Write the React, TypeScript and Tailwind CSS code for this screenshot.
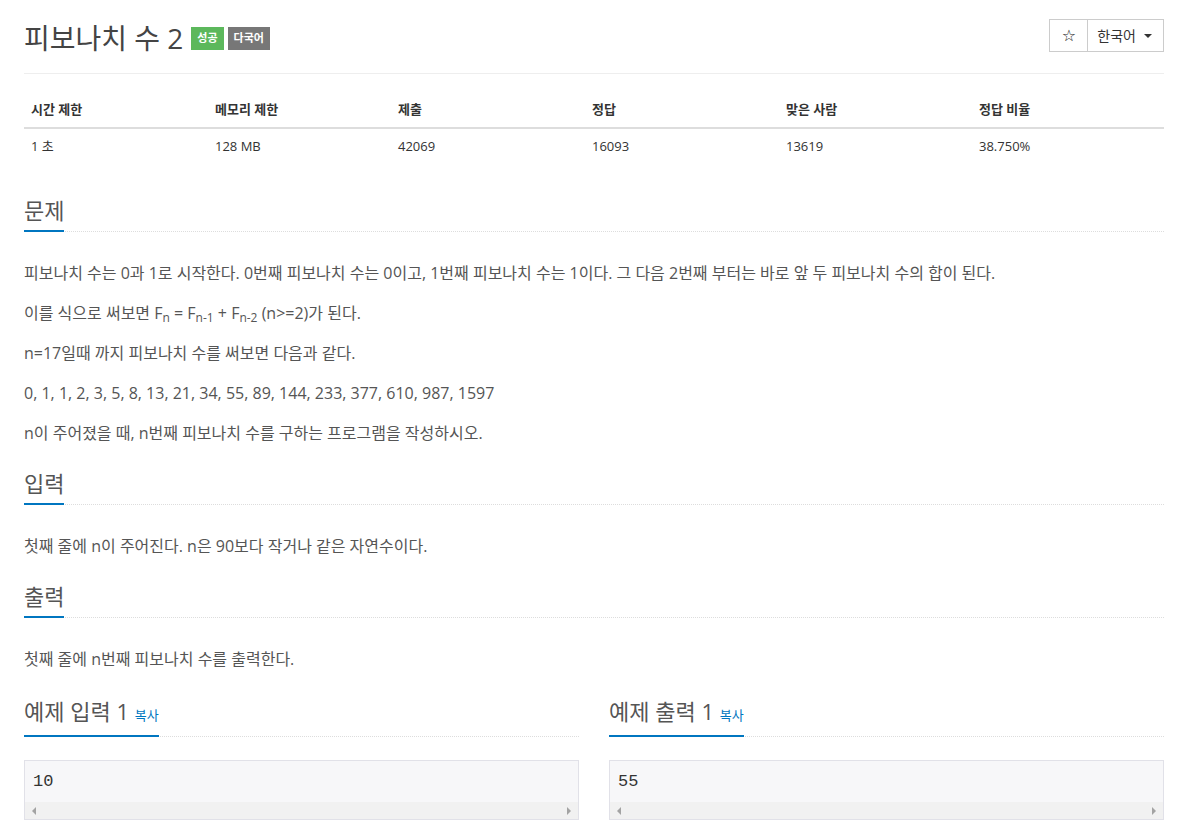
const font = "font-['Open_Sans','Noto_Sans_CJK_KR',sans-serif]";

function Heading({ children }: { children: React.ReactNode }) {
  return (
    <div className="flex items-end border-b border-dotted border-[#ddd]">
      <h2 className="-mb-px border-b-2 border-[#0076c0] pb-[6px] text-[22px] leading-[28px] font-normal text-[#555]">
        {children}
      </h2>
    </div>
  );
}

function Sample({ title, value }: { title: string; value: string }) {
  return (
    <div className="flex-1">
      <Heading>
        {title} <span className="text-[13px] text-[#0076c0]">복사</span>
      </Heading>
      <div className="mt-[23px] border border-[#e1e1e8] bg-[#f7f7f9]">
        <div className="h-[41px] px-[8px] pt-[10px] font-['Liberation_Mono',monospace] text-[17px] leading-[22px] text-[#333]">
          {value}
        </div>
        <div className="flex h-[17px] items-center justify-between bg-[#f1f1f1] px-[7px]">
          <span className="h-0 w-0 border-y-[4px] border-r-[4px] border-y-transparent border-r-[#a3a3a3]"></span>
          <span className="h-0 w-0 border-y-[4px] border-l-[4px] border-y-transparent border-l-[#a3a3a3]"></span>
        </div>
      </div>
    </div>
  );
}

export default function App() {
  const heads = ["시간 제한", "메모리 제한", "제출", "정답", "맞은 사람", "정답 비율"];
  const vals = ["1 초", "128 MB", "42069", "16093", "13619", "38.750%"];

  return (
    <div className={`min-h-[832px] bg-white pl-[24px] ${font}`}>
      <div className="flex w-[1140px] flex-col">
        {/* title */}
        <div className="flex items-start justify-between border-b border-[#eee] pt-[20px] pb-[17px]">
          <div className="flex items-center">
            <h1 className="text-[28px] leading-[36px] font-normal text-[#444]">피보나치 수 2</h1>
            <span className="ml-[8px] flex h-[23px] items-center bg-[#5cb85c] px-[6px] text-[11px] font-bold text-white">성공</span>
            <span className="ml-[4px] flex h-[23px] items-center bg-[#777] px-[6px] text-[11px] font-bold text-white">다국어</span>
          </div>
          <div className="-mt-px flex h-[33px] border border-[#ccc] text-[14px] text-[#333]">
            <div className="flex w-[38px] items-center justify-center border-r border-[#ccc] font-['DejaVu_Sans',sans-serif] text-[16px] text-[#222]">☆</div>
            <div className="flex items-center gap-[8px] pl-[9px] pr-[11px]">
              한국어
              <span className="h-0 w-0 border-x-[4px] border-t-[4px] border-x-transparent border-t-[#333]"></span>
            </div>
          </div>
        </div>

        {/* info table */}
        <div className="mt-[18px] text-[13px] text-[#333]">
          <div className="grid grid-cols-[184px_183px_194px_194px_193px_192px] border-b-2 border-[#ddd]">
            {heads.map((h) => (
              <div key={h} className="h-[35px] px-[7px] leading-[35px] font-bold">{h}</div>
            ))}
          </div>
          <div className="grid grid-cols-[184px_183px_194px_194px_193px_192px]">
            {vals.map((v) => (
              <div key={v} className="h-[34px] px-[7px] leading-[34px]">{v}</div>
            ))}
          </div>
        </div>

        {/* 문제 */}
        <div className="mt-[33px]">
          <Heading>문제</Heading>
          <div className="mt-[29px] text-[16px] leading-[24px] text-[#555]">
            <p className="mb-[16px]">피보나치 수는 0과 1로 시작한다. 0번째 피보나치 수는 0이고, 1번째 피보나치 수는 1이다. 그 다음 2번째 부터는 바로 앞 두 피보나치 수의 합이 된다.</p>
            <p className="mb-[16px]">
              이를 식으로 써보면 F<sub>n</sub> = F<sub>n-1</sub> + F<sub>n-2</sub> (n&gt;=2)가 된다.
            </p>
            <p className="mb-[16px]">n=17일때 까지 피보나치 수를 써보면 다음과 같다.</p>
            <p className="mb-[16px]">0, 1, 1, 2, 3, 5, 8, 13, 21, 34, 55, 89, 144, 233, 377, 610, 987, 1597</p>
            <p className="mb-[16px]">n이 주어졌을 때, n번째 피보나치 수를 구하는 프로그램을 작성하시오.</p>
          </div>
        </div>

        {/* 입력 */}
        <div className="mt-[8px]">
          <Heading>입력</Heading>
          <p className="mt-[29px] mb-[16px] text-[16px] leading-[24px] text-[#555]">첫째 줄에 n이 주어진다. n은 90보다 작거나 같은 자연수이다.</p>
        </div>

        {/* 출력 */}
        <div className="mt-[8px]">
          <Heading>출력</Heading>
          <p className="mt-[29px] mb-[16px] text-[16px] leading-[24px] text-[#555]">첫째 줄에 n번째 피보나치 수를 출력한다.</p>
        </div>

        {/* 예제 */}
        <div className="mt-[10px] flex gap-[30px]">
          <Sample title="예제 입력 1" value="10" />
          <Sample title="예제 출력 1" value="55" />
        </div>
      </div>
    </div>
  );
}
